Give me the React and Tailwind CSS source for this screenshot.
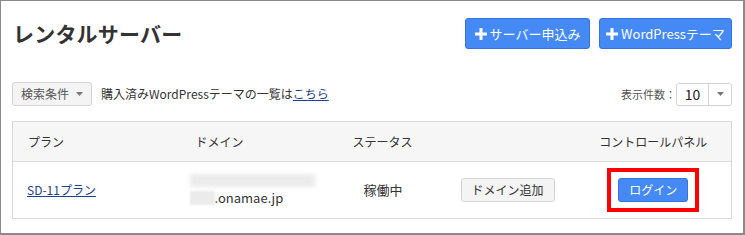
function Plus() {
    return (
        <svg className="h-[12px] w-[12px]" viewBox="0 0 12 12" aria-hidden="true">
            <path d="M4.5 0h3v4.5H12v3H7.5V12h-3V7.5H0v-3h4.5z" fill="currentColor" />
        </svg>
    );
}

function Caret() {
    return (
        <svg className="h-[4px] w-[7px] text-[#777]" viewBox="0 0 7 4" aria-hidden="true">
            <path d="M0 0h7L3.5 4z" fill="currentColor" />
        </svg>
    );
}

export default function App() {
    return (
        <div
            className="h-[235px] w-[745px] overflow-hidden border border-b-2 border-r-2 border-[#8a8a8a] bg-white px-[11px] pt-[17px] text-[13px] text-[#333]"
            style={{ fontFamily: '"Noto Sans CJK JP", "Noto Sans", sans-serif' }}
        >
            <div className="flex items-center justify-between">
                <h1 className="pl-[1px] text-[21px] font-bold leading-none tracking-[0.2px] text-[#333]">
                    レンタルサーバー
                </h1>
                <div className="flex gap-[9px]">
                    <button className="flex h-[31px] w-[125px] items-center justify-center gap-[3px] rounded-[3px] border border-[#3574de] bg-[#4489f4] text-[13px] text-white">
                        <Plus />
                        サーバー申込み
                    </button>
                    <button className="flex h-[31px] w-[133px] items-center justify-center gap-[3px] rounded-[3px] border border-[#3574de] bg-[#4489f4] text-[13px] text-white">
                        <Plus />
                        WordPressテーマ
                    </button>
                </div>
            </div>

            <div className="mt-[33px] flex h-[24px] items-center justify-between">
                <div className="flex items-center">
                    <button className="flex h-[24px] w-[80px] items-center justify-center gap-[7px] rounded-[3px] border border-[#d4d4d4] bg-[#f4f4f4] text-[12px] text-[#555]">
                        検索条件
                        <Caret />
                    </button>
                    <p className="ml-[9px] text-[12px] text-[#333]">
                        購入済みWordPressテーマの一覧は
                        <a href="#" className="text-[#1e3f8f] underline">
                            こちら
                        </a>
                    </p>
                </div>
                <div className="flex items-center">
                    <span className="text-[11px] text-[#555]">表示件数：</span>
                    <div className="flex h-[23px] w-[56px] items-center rounded-[3px] border border-[#d4d4d4] bg-white">
                        <span className="w-[31px] text-center text-[14px] text-[#222]">10</span>
                        <span className="flex h-full flex-1 items-center justify-center border-l border-[#d4d4d4]">
                            <Caret />
                        </span>
                    </div>
                </div>
            </div>

            <table className="mt-[15px] w-[720px] table-fixed border-collapse border border-[#d9d9d9] text-left">
                <colgroup>
                    <col className="w-[168px]" />
                    <col className="w-[157px]" />
                    <col className="w-[108px]" />
                    <col className="w-[130px]" />
                    <col />
                </colgroup>
                <thead>
                    <tr className="h-[40px] border-b border-[#d9d9d9] bg-[#f6f6f6] text-[12px] text-[#333]">
                        <th className="pl-[15px] font-normal">プラン</th>
                        <th className="pl-[15px] font-normal">ドメイン</th>
                        <th className="pl-[15px] font-normal">ステータス</th>
                        <th className="font-normal"></th>
                        <th className="text-center font-normal">コントロールパネル</th>
                    </tr>
                </thead>
                <tbody>
                    <tr className="h-[57px] text-[13px]">
                        <td className="pl-[14px]">
                            <a href="#" className="text-[12px] text-[#1e3f8f] underline">
                                SD-11プラン
                            </a>
                        </td>
                        <td className="pl-[9px]">
                            <div className="flex flex-col gap-[3px]">
                                <div className="h-[13px] w-[125px] rounded-[2px] bg-[#ebebeb] blur-[2px]"></div>
                                <div className="flex items-center">
                                    <div className="h-[14px] w-[25px] bg-[#ebebeb] blur-[1px]"></div>
                                    <span className="leading-[16px] text-[#333]">.onamae.jp</span>
                                </div>
                            </div>
                        </td>
                        <td className="pl-[26px] text-[#333]">稼働中</td>
                        <td className="pl-[15px]">
                            <button className="flex h-[24px] w-[94px] items-center justify-center rounded-[3px] border border-[#d4d4d4] bg-[#f4f4f4] text-[12px] text-[#333]">
                                ドメイン追加
                            </button>
                        </td>
                        <td className="text-center">
                            <div className="inline-flex border-4 border-[#ff0000] px-[7px] py-[6px]">
                                <button className="flex h-[24px] w-[70px] items-center justify-center rounded-[3px] border border-[#3574de] bg-[#4489f4] text-[12px] text-white">
                                    ログイン
                                </button>
                            </div>
                        </td>
                    </tr>
                </tbody>
            </table>
        </div>
    );
}
